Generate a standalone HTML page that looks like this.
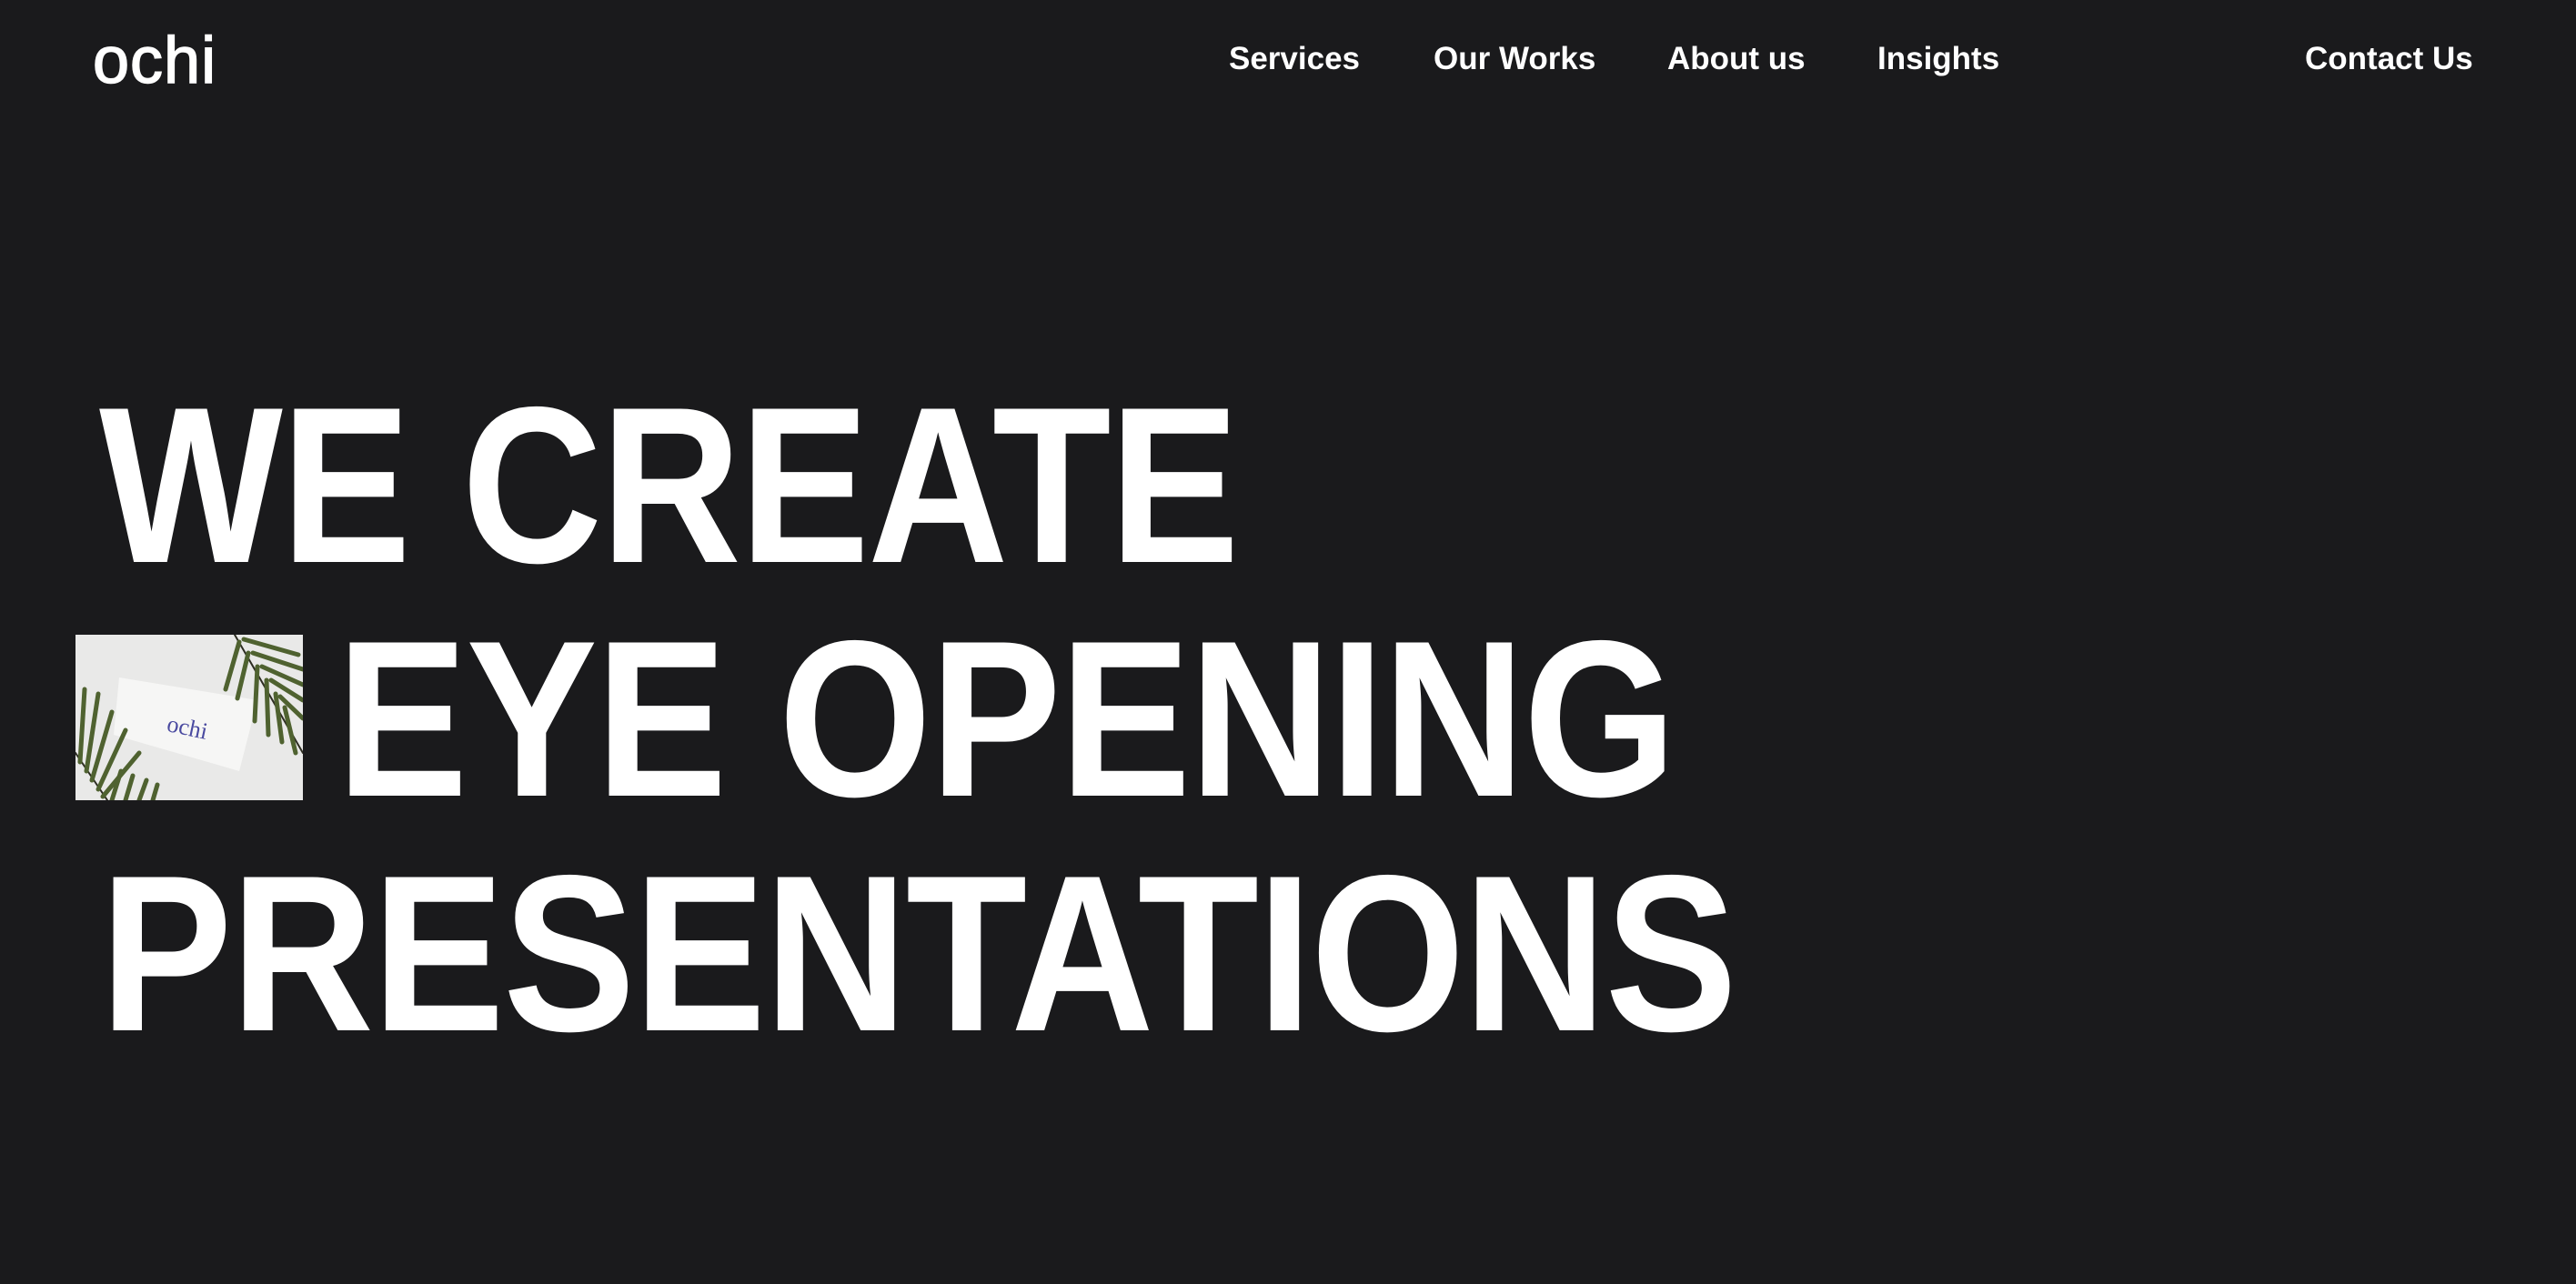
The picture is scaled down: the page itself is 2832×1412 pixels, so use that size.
<!DOCTYPE html>
<html><head><meta charset="utf-8"><style>
html,body{margin:0;padding:0;background:#1a1a1c;width:2832px;height:1412px;overflow:hidden;font-family:"Liberation Sans",sans-serif;color:#fff}
.logo{position:absolute;left:102px;top:22px;font-size:72px;line-height:90px;letter-spacing:1px;-webkit-text-stroke:1.5px #fff}
.nav{position:absolute;top:43px;font-size:35px;font-weight:bold;line-height:44px;white-space:nowrap}
.h{position:absolute;font-size:245px;line-height:255px;font-weight:bold;white-space:nowrap;transform-origin:0 0;letter-spacing:-2px}
</style></head><body>
<div class="logo">ochi</div>
<div class="nav" style="left:1351px">Services</div>
<div class="nav" style="left:1576px">Our Works</div>
<div class="nav" style="left:1833px">About us</div>
<div class="nav" style="left:2064px">Insights</div>
<div class="nav" style="left:2534px">Contact Us</div>

<div class="h" style="left:109px;top:406px;transform:scaleX(0.873)">WE CREATE</div>
<div class="h" style="left:370px;top:663px;transform:scaleX(0.883)">EYE OPENING</div>
<div class="h" style="left:110px;top:921px;transform:scaleX(0.89)">PRESENTATIONS</div>

<svg style="position:absolute;left:83px;top:698px" width="250" height="182" viewBox="0 0 250 182">
<rect width="250" height="182" fill="#e9e9e8"/>
<polygon points="48,47 200,72 180,150 42,110" fill="#f6f6f5"/>
<text x="100" y="110" font-family="Liberation Serif,serif" font-size="26" fill="#4a4aa0" transform="rotate(12 120 105)">ochi</text>
<g stroke="#4f6230" stroke-width="5" stroke-linecap="round">
<path d="M175,0 L250,130" stroke="#2d2d22" stroke-width="2"/>
<path d="M180,8 L165,60"/><path d="M190,20 L178,70"/><path d="M200,35 L197,95"/><path d="M210,50 L212,110"/><path d="M220,65 L227,118"/><path d="M230,80 L242,130"/>
<path d="M185,5 L245,22"/><path d="M195,20 L250,38"/><path d="M205,35 L250,55"/><path d="M215,50 L250,72"/><path d="M225,68 L250,92"/>
<path d="M0,130 L35,182" stroke="#2d2d22" stroke-width="2"/>
<path d="M5,140 L10,60"/><path d="M12,150 L25,65"/><path d="M18,160 L40,85"/><path d="M25,170 L55,105"/><path d="M30,178 L70,130"/>
<path d="M40,182 L50,150"/><path d="M55,182 L63,155"/><path d="M70,182 L78,160"/><path d="M85,182 L90,165"/>
</g>
</svg>
</body></html>
